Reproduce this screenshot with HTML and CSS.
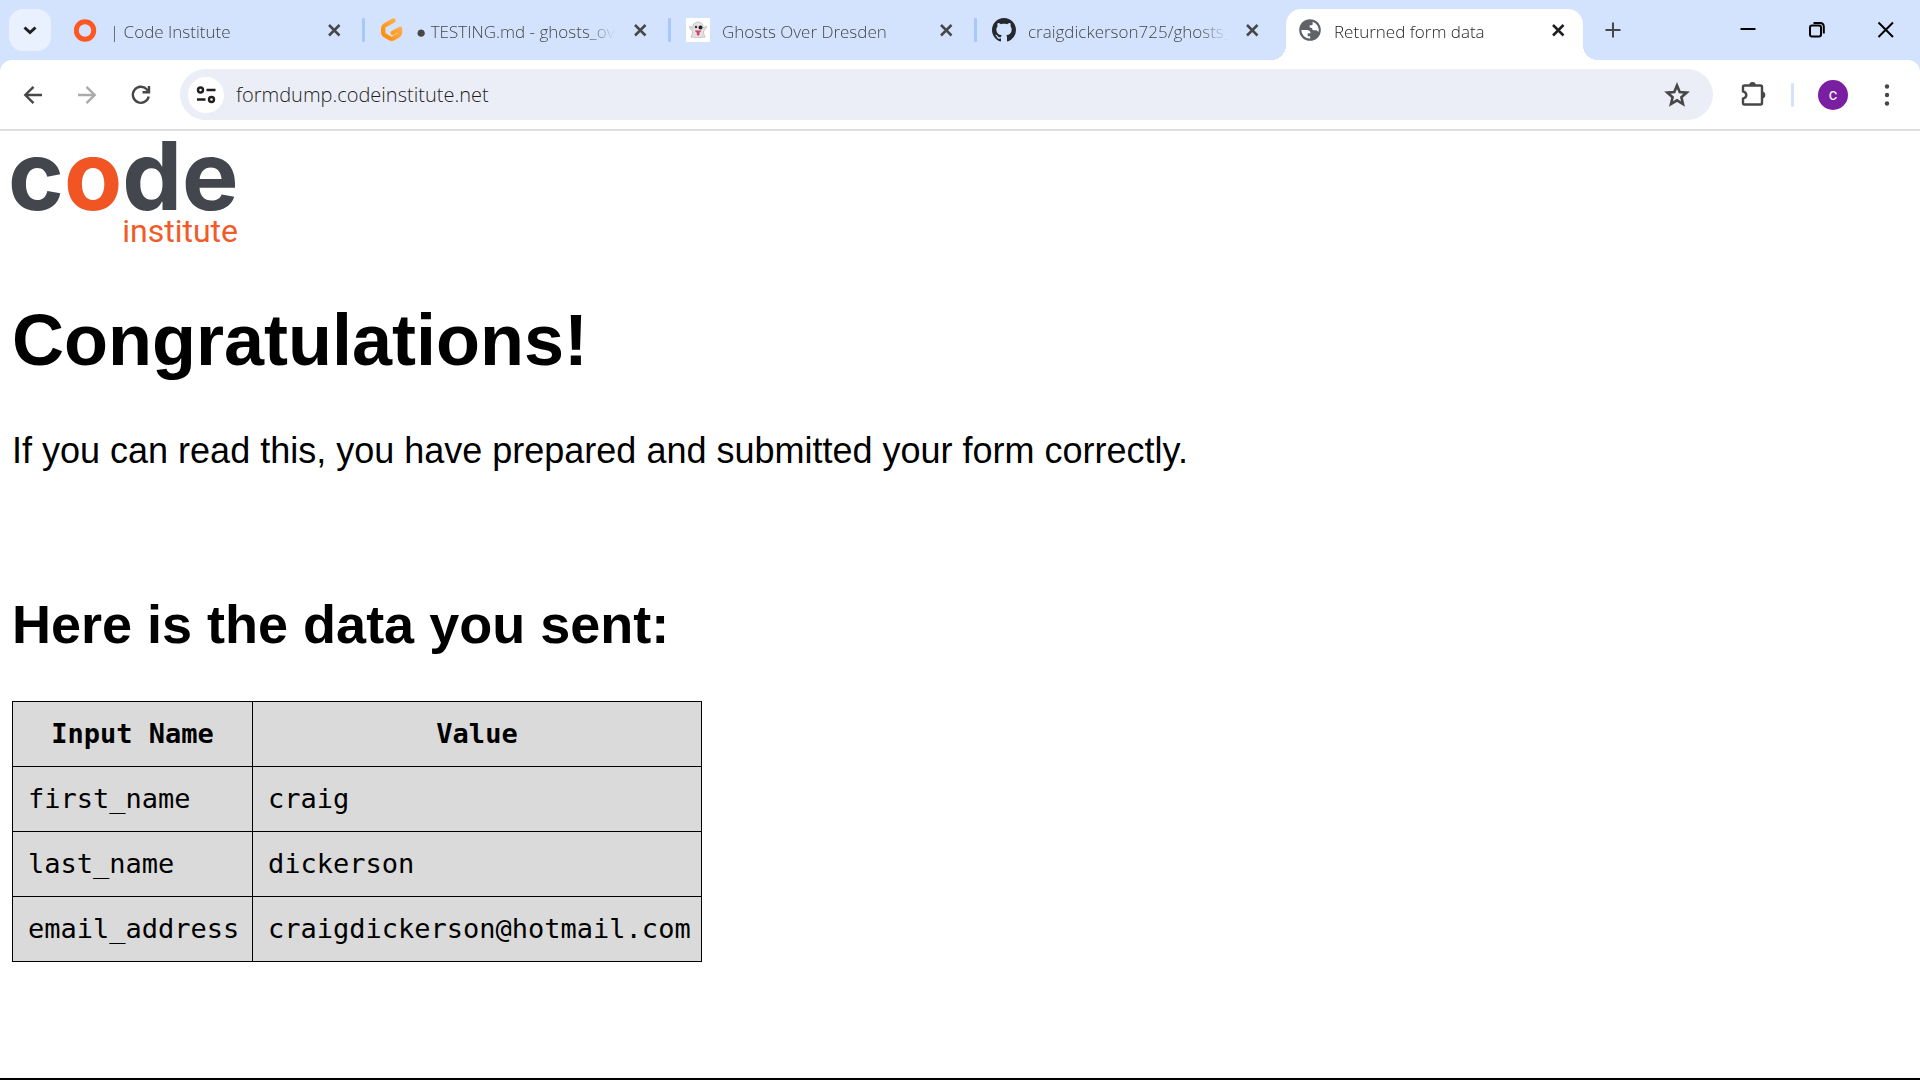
FILE: index.html
```html
<!DOCTYPE html>
<html lang="en">
<head>
<meta charset="utf-8">
<title>Returned form data</title>
<link rel="stylesheet" href="styles.css">
</head>
<body>
<header class="browser">
  <div class="tab-strip">
    <button class="tab-search" aria-label="Search tabs"><svg width="24" height="24" viewBox="0 0 24 24"><path d="M6.500 9.500l5.500 5 5.500-5" class="line bold"/></svg></button>
    <nav class="tabs" aria-label="Open tabs">
      <div class="tab">
        <svg class="favicon" viewBox="0 0 24 24"><circle cx="11" cy="12.500" r="8.700" fill="none" stroke="#ff5722" stroke-width="5"/></svg>
        <a class="title" href="#">| Code Institute</a>
        <button class="close" aria-label="Close tab"><svg width="24" height="24" viewBox="0 0 24 24"><path d="M7 7l10.500 10.500M17.500 7L7 17.500" class="line"/></svg></button>
        <span class="divider"></span>
      </div>
      <div class="tab">
        <svg class="favicon" viewBox="0 0 24 24"><defs><linearGradient id="g" x1="0" y1="1" x2="1" y2="0"><stop offset="0" stop-color="#ff8a00"/><stop offset="1" stop-color="#ffb45b"/></linearGradient></defs><path d="M13.500 2.500L4.800 7.400Q3.200 8.300 3.200 10v4.800q0 1.600 1.400 2.400l5.500 3.200q1.600.9 3.200 0l5.300-3.100q1.500-.8 1.500-2.500V10.800l-7.400 4.200" fill="none" stroke="url(#g)" stroke-width="4.400" stroke-linecap="round" stroke-linejoin="round"/></svg>
        <a class="title" href="#">● TESTING.md - ghosts_over_dresden</a>
        <button class="close" aria-label="Close tab"><svg width="24" height="24" viewBox="0 0 24 24"><path d="M7 7l10.500 10.500M17.500 7L7 17.500" class="line"/></svg></button>
        <span class="divider"></span>
      </div>
      <div class="tab">
        <svg class="favicon" viewBox="0 0 24 24"><path fill="#fff" d="M0 0h24v24H0z"/><path d="M12 4c-3.800 0-5.200 2.800-5.200 6.200L4.200 8.300c-.9-.3-1 .8-.4 1.800l2.700 3.400c0 2.500-.8 4-1.600 5.500 1 .8 2 .2 3 0 1.300 1 2.600 1 4.100 0 1.500 1 2.800 1 4.100 0 1 .2 2 .8 3 0-.8-1.500-1.600-3-1.600-5.500l2.700-3.400c.6-1 .5-2.100-.4-1.800l-2.600 1.900C17.200 6.800 15.800 4 12 4z" fill="#e3e1e4" stroke="#b5b0b5" stroke-width=".7"/><circle cx="10" cy="9" r="1.200" fill="#333"/><circle cx="14.500" cy="9.500" r="2" fill="#222"/><path d="M9 12.500h6c0 1-.8 1.700-1.500 2V16c0 2-2.700 2-2.700 0v-1.500c-.9-.3-1.600-.9-1.800-2z" fill="#d9406c"/></svg>
        <a class="title" href="#">Ghosts Over Dresden</a>
        <button class="close" aria-label="Close tab"><svg width="24" height="24" viewBox="0 0 24 24"><path d="M7 7l10.500 10.500M17.500 7L7 17.500" class="line"/></svg></button>
        <span class="divider"></span>
      </div>
      <div class="tab">
        <svg class="favicon" viewBox="0 0 16 16"><path fill="#24292f" d="M8 0C3.580 0 0 3.580 0 8c0 3.540 2.290 6.530 5.470 7.590.4.070.55-.17.55-.38 0-.19-.01-.82-.01-1.490-2.010.37-2.530-.49-2.690-.94-.09-.23-.48-.94-.82-1.130-.28-.15-.68-.52-.01-.53.63-.01 1.080.58 1.230.82.72 1.210 1.870.87 2.330.66.07-.52.28-.87.51-1.070-1.780-.2-3.640-.89-3.640-3.950 0-.87.31-1.590.82-2.150-.08-.2-.36-1.020.08-2.120 0 0 .67-.21 2.200.82.640-.18 1.320-.27 2-.27s1.360.09 2 .27c1.530-1.040 2.200-.82 2.200-.82.440 1.100.160 1.920.080 2.120.510.560.820 1.270.820 2.150 0 3.070-1.870 3.750-3.650 3.950.290.250.540.730.540 1.480 0 1.070-.01 1.930-.01 2.200 0 .21.150.46.550.38A8.010 8.010 0 0016 8c0-4.420-3.580-8-8-8z"/></svg>
        <a class="title" href="#">craigdickerson725/ghosts_over_dresden</a>
        <button class="close" aria-label="Close tab"><svg width="24" height="24" viewBox="0 0 24 24"><path d="M7 7l10.500 10.500M17.500 7L7 17.500" class="line"/></svg></button>
      </div>
      <div class="tab active">
        <svg class="favicon" viewBox="0 0 24 24"><circle cx="12" cy="12" r="10.800" fill="#5f6368"/><path fill="#fff" d="M3.300 12h5.200c3 0 4 1.500 4 3.300H9.700v3h2.500v2.300A8.700 8.700 0 013.300 12zM14.500 3.700a8.700 8.700 0 016 10.300c-1-1.500-2-1.800-3.500-1.800h-2.300c0-2-1.200-2.700-3-2.700V7.300h2.500c.6-1 .6-2.300.3-3.600z"/></svg>
        <a class="title" href="#">Returned form data</a>
        <button class="close" aria-label="Close tab"><svg width="24" height="24" viewBox="0 0 24 24"><path d="M7 7l10.500 10.500M17.500 7L7 17.500" class="line"/></svg></button>
      </div>
    </nav>
    <button class="new-tab" aria-label="New tab"><svg width="24" height="24" viewBox="0 0 24 24"><path d="M12 4.500v15M4.500 12h15" class="line"/></svg></button>
    <div class="window-controls">
      <button aria-label="Minimize"><svg width="24" height="24" viewBox="0 0 24 24"><path d="M4.500 11h15" class="line"/></svg></button>
      <button aria-label="Restore"><svg width="24" height="24" viewBox="0 0 24 24"><rect x="5" y="7.500" width="11" height="11" rx="2" class="line"/><path d="M8.500 5H15q3.800 0 3.800 3.800v6.700" class="line"/></svg></button>
      <button aria-label="Close"><svg width="24" height="24" viewBox="0 0 24 24"><path d="M4.500 4.500l14.500 14.500M19 4.500L4.500 19" class="line"/></svg></button>
    </div>
  </div>
  <div class="toolbar">
    <button class="nav" aria-label="Back"><svg width="24" height="24" viewBox="0 0 24 24"><path d="M21 12H4.500M12.500 3.800L4.300 12l8.200 8.200" class="line"/></svg></button>
    <button class="nav" aria-label="Forward" disabled><svg width="24" height="24" viewBox="0 0 24 24"><path d="M3 12h16.500M11.500 3.800l8.200 8.200-8.200 8.200" class="line"/></svg></button>
    <button class="nav" aria-label="Reload"><svg width="24" height="24" viewBox="0 0 24 24"><path d="M19.700 13.500a8 8 0 11-2-7.200l2.300 2.300M20 3v6.300h-6.500" class="line"/></svg></button>
    <div class="address">
      <button class="site-info" aria-label="Site information"><svg width="24" height="24" viewBox="0 0 24 24"><circle cx="6.500" cy="7" r="2.500" class="line"/><path d="M12.500 7h9M3 16.500h8.500" class="line"/><circle cx="17.500" cy="16.500" r="2.500" class="line"/></svg></button>
      <input type="text" aria-label="Address" value="formdump.codeinstitute.net">
      <button class="star" aria-label="Bookmark this page"><svg width="28" height="28" viewBox="0 0 28 28"><path d="M14 4.500l2.700 6.500 7 .6-5.300 4.600 1.600 6.900-6-3.700-6 3.700 1.600-6.900-5.300-4.600 7-.6z" class="line"/></svg></button>
    </div>
    <button class="extensions" aria-label="Extensions"><svg width="28" height="28" viewBox="0 0 28 28"><path d="M4 6q0-1.500 1.500-1.500h16Q23 4.500 23 6v16q0 1.500-1.500 1.500h-16Q4 23.500 4 22v-4.300q3.300-.9 3.300-3.700T4 10.300z" class="line"/><path d="M10.300 4a3.200 3 0 016.400 0zM23 10.500a3.200 3.400 0 010 7z" fill="currentColor"/></svg></button>
    <span class="divider"></span>
    <button class="avatar" aria-label="Profile">c</button>
    <button class="menu" aria-label="Menu"><svg width="24" height="24" viewBox="0 0 24 24"><g fill="currentColor"><circle cx="12" cy="3.500" r="2.200"/><circle cx="12" cy="12" r="2.200"/><circle cx="12" cy="20.500" r="2.200"/></g></svg></button>
  </div>
</header>
<main class="page">
  <svg class="logo" width="230" height="107" viewBox="0 0 230 107" role="img" aria-label="Code Institute"><text x="-4" y="67" class="logo-code">c<tspan class="logo-o">o</tspan>de</text><text x="226" y="99" class="logo-institute">institute</text></svg>
  <h1>Congratulations!</h1>
  <p>If you can read this, you have prepared and submitted your form correctly.</p>
  <h2>Here is the data you sent:</h2>
  <table>
    <thead><tr><th class="name" scope="col">Input Name</th><th scope="col">Value</th></tr></thead>
    <tbody>
      <tr><td>first_name</td><td>craig</td></tr>
      <tr><td>last_name</td><td>dickerson</td></tr>
      <tr><td>email_address</td><td>craigdickerson@hotmail.com</td></tr>
    </tbody>
  </table>
</main>
</body>
</html>
```
FILE: styles.css
```css
* { box-sizing: border-box; }

body {
  margin: 0;
  min-height: 100vh;
  display: flex;
  flex-direction: column;
  border-bottom: 2px solid #000;
  background: #fff;
  color: #000;
  font-family: "Liberation Sans", Arial, sans-serif;
}

button {
  display: flex;
  align-items: center;
  justify-content: center;
  flex: none;
  padding: 0;
  border: 0;
  background: none;
  color: inherit;
}

svg { flex: none; }
.line { fill: none; stroke: currentColor; stroke-width: 2; }
.bold { stroke-width: 3; }

.browser {
  background: #d3e3fd;
  color: #474747;
  font-family: "Open Sans", "Noto Sans", sans-serif;
}

.tab-strip { display: flex; height: 60px; }

.tab-search {
  width: 42px;
  height: 42px;
  margin: 9px;
  border-radius: 14px;
  background: #e9f1fe;
  color: #1f1f1f;
}

.tabs { display: flex; flex: 0 1 1530px; min-width: 0; }

.tab {
  display: flex;
  align-items: center;
  flex: 0 1 306px;
  min-width: 0;
  padding-left: 14px;
}

.favicon { width: 24px; height: 24px; }

.title {
  flex: 0 1 200px;
  min-width: 0;
  margin: 0 12px;
  padding-top: 3px;
  overflow: hidden;
  color: inherit;
  font-size: 17px;
  line-height: 24px;
  text-decoration: none;
  white-space: nowrap;
  -webkit-mask-image: linear-gradient(to right, #000 170px, transparent 200px);
  mask-image: linear-gradient(to right, #000 170px, transparent 200px);
}

.close { width: 24px; height: 24px; }
.close .line { stroke-width: 2.5; }

.divider {
  flex: none;
  width: 3px;
  height: 24px;
  border-radius: 1px;
  background: #a8c7fa;
}

.tab .divider { margin-left: 16px; }

.tab.active {
  position: relative;
  flex-basis: 297px;
  margin: 9px 7px 0 2px;
  padding: 0 0 9px 12px;
  border-radius: 15px 15px 0 0;
  background: #fff;
  color: #1f1f1f;
}

.tab.active::before,
.tab.active::after {
  content: "";
  position: absolute;
  bottom: 0;
  width: 15px;
  height: 15px;
}

.tab.active::before {
  right: 100%;
  background: radial-gradient(circle at top left, transparent 15px, #fff 15px);
}

.tab.active::after {
  left: 100%;
  background: radial-gradient(circle at top right, transparent 15px, #fff 15px);
}

.new-tab { width: 42px; margin-left: 2px; }

.window-controls { display: flex; margin-left: auto; color: #000; }
.window-controls button { width: 69px; }

.toolbar {
  display: flex;
  align-items: center;
  height: 71px;
  padding: 0 6px;
  border-bottom: 2px solid #dfdfdf;
  border-radius: 12px 12px 0 0;
  background: #fff;
}

.nav { width: 54px; height: 51px; }
.nav .line { stroke-width: 2.4; }
.nav:disabled { color: #aaa; }

.address {
  display: flex;
  align-items: center;
  flex: 1;
  min-width: 0;
  height: 51px;
  margin-left: 12px;
  padding: 0 16px 0 8px;
  border-radius: 26px;
  background: #ebeef7;
}

.site-info {
  width: 36px;
  height: 36px;
  border-radius: 50%;
  background: #fff;
  color: #1f1f1f;
}

.site-info .line { stroke-width: 2.4; }

.address input {
  flex: 1;
  min-width: 0;
  margin: 0 12px;
  padding: 0;
  border: 0;
  outline: 0;
  background: none;
  color: #1f1f1f;
  font: inherit;
  font-size: 20px;
}

.star { width: 40px; height: 40px; }
.star .line { stroke-width: 2.6; }

.extensions { width: 40px; height: 40px; margin: 0 38px 0 20px; }
.extensions .line { stroke-width: 2.4; }

.toolbar > .divider { background: #d3e3fd; margin-left: -20px; }

.avatar {
  width: 30px;
  height: 30px;
  margin: 0 24px;
  border-radius: 50%;
  background: #7b1fa2;
  color: #fff;
  font-family: Roboto, sans-serif;
  font-size: 16px;
}

.menu { width: 30px; height: 40px; margin-right: 12px; }

.tab .title, .address input { font-weight: 350; }

.page { flex: 1; padding: 12px; }

.logo { display: block; overflow: visible; }
.logo-code { fill: #43474d; font: 700 95px Inter, sans-serif; }
.logo-o { fill: #f15524; }
.logo-institute { fill: #f15a29; font: 400 32px Roboto, sans-serif; text-anchor: end; }

h1 { margin: 48px 0; font-size: 72px; line-height: 84px; }
p { margin: 0; font-size: 36px; line-height: 42px; }
h2 { margin: 121px 0 46px; font-size: 54px; line-height: 62px; }

table {
  table-layout: fixed;
  width: 690px;
  border-collapse: collapse;
  background: #dadada;
  font-family: "DejaVu Sans Mono", monospace;
  font-size: 27px;
  line-height: 34px;
}

th, td { padding: 15px 10px 15px 15px; border: 1px solid #000; text-align: left; }
th { padding: 15px; text-align: center; }
.name { width: 240px; }
```
